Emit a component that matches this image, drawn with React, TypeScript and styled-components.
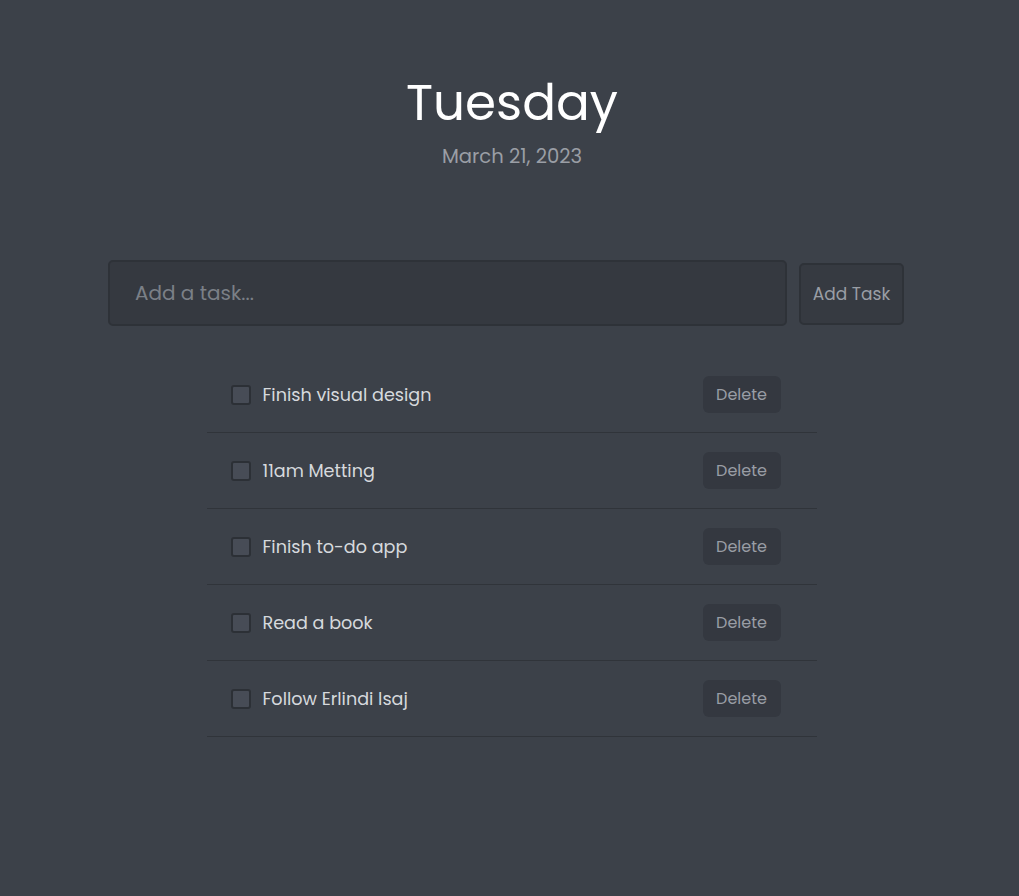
import React, { useState } from "react";
import styled, { createGlobalStyle } from "styled-components";

const Global = createGlobalStyle`
  html, body { margin: 0; padding: 0; background: #3c4149; }
  body { font-family: "Poppins", "Inter", "Noto Sans", sans-serif; }
  * { box-sizing: border-box; }
`;

const Page = styled.div`
  min-height: 896px;
  background: #3c4149;
  display: flex;
  flex-direction: column;
  align-items: center;
  padding-top: 72px;
`;

const Header = styled.header`
  display: flex;
  flex-direction: column;
  align-items: center;
  padding-left: 5px;
`;

const Day = styled.h1`
  margin: 0;
  font-size: 50px;
  font-weight: 400;
  line-height: 62px;
  color: #ffffff;
`;

const DateText = styled.div`
  margin-top: 10px;
  font-size: 19.6px;
  line-height: 24px;
  color: #9a9ea5;
`;

const Form = styled.form`
  margin-top: 92px;
  margin-right: 7px;
  width: 796px;
  display: flex;
  align-items: center;
  gap: 12px;
`;

const Input = styled.input`
  flex: 1;
  height: 66px;
  background: #353940;
  border: 2px solid #2e3238;
  border-radius: 5px;
  padding: 0 25px;
  font-family: inherit;
  font-size: 20px;
  color: #c8cbd0;
  outline: none;
  &::placeholder { color: #7b8087; }
`;

const AddButton = styled.button`
  width: 105px;
  height: 62px;
  margin-top: 2px;
  background: #363a41;
  border: 2px solid #2e3238;
  border-radius: 5px;
  font-family: inherit;
  font-size: 17px;
  color: #9a9ea5;
  cursor: pointer;
`;

const List = styled.ul`
  list-style: none;
  margin: 31px 0 0 4px;
  padding: 0;
  width: 610px;
`;

const Row = styled.li`
  height: 76px;
  display: flex;
  align-items: center;
  padding: 0 36px 0 24px;
  border-bottom: 1px solid #30343a;
`;

const Check = styled.input`
  appearance: none;
  width: 20px;
  height: 20px;
  margin: 0 12px 0 0;
  background: #474c56;
  border: 2px solid #2c3036;
  border-radius: 3px;
  cursor: pointer;
  &:checked { background: #6b7280; }
`;

const Label = styled.span<{ $done: boolean }>`
  flex: 1;
  font-size: 17.6px;
  color: #d6d9dd;
  text-decoration: ${(p) => (p.$done ? "line-through" : "none")};
`;

const DeleteButton = styled.button`
  width: 78px;
  height: 37px;
  background: #343840;
  border: none;
  border-radius: 6px;
  font-family: inherit;
  font-size: 16px;
  color: #999da5;
  cursor: pointer;
`;

const initial = [
  "Finish visual design",
  "11am Metting",
  "Finish to-do app",
  "Read a book",
  "Follow Erlindi Isaj",
];

export default function App() {
  const [tasks, setTasks] = useState(initial.map((t, i) => ({ id: i, text: t, done: false })));
  const [value, setValue] = useState("");

  return (
    <Page>
      <Global />
      <Header>
        <Day>Tuesday</Day>
        <DateText>March 21, 2023</DateText>
      </Header>
      <Form
        onSubmit={(e) => {
          e.preventDefault();
          if (!value.trim()) return;
          setTasks([...tasks, { id: Date.now(), text: value, done: false }]);
          setValue("");
        }}
      >
        <Input placeholder="Add a task..." value={value} onChange={(e) => setValue(e.target.value)} />
        <AddButton type="submit">Add Task</AddButton>
      </Form>
      <List>
        {tasks.map((t) => (
          <Row key={t.id}>
            <Check
              type="checkbox"
              checked={t.done}
              onChange={() => setTasks(tasks.map((x) => (x.id === t.id ? { ...x, done: !x.done } : x)))}
            />
            <Label $done={t.done}>{t.text}</Label>
            <DeleteButton onClick={() => setTasks(tasks.filter((x) => x.id !== t.id))}>Delete</DeleteButton>
          </Row>
        ))}
      </List>
    </Page>
  );
}
